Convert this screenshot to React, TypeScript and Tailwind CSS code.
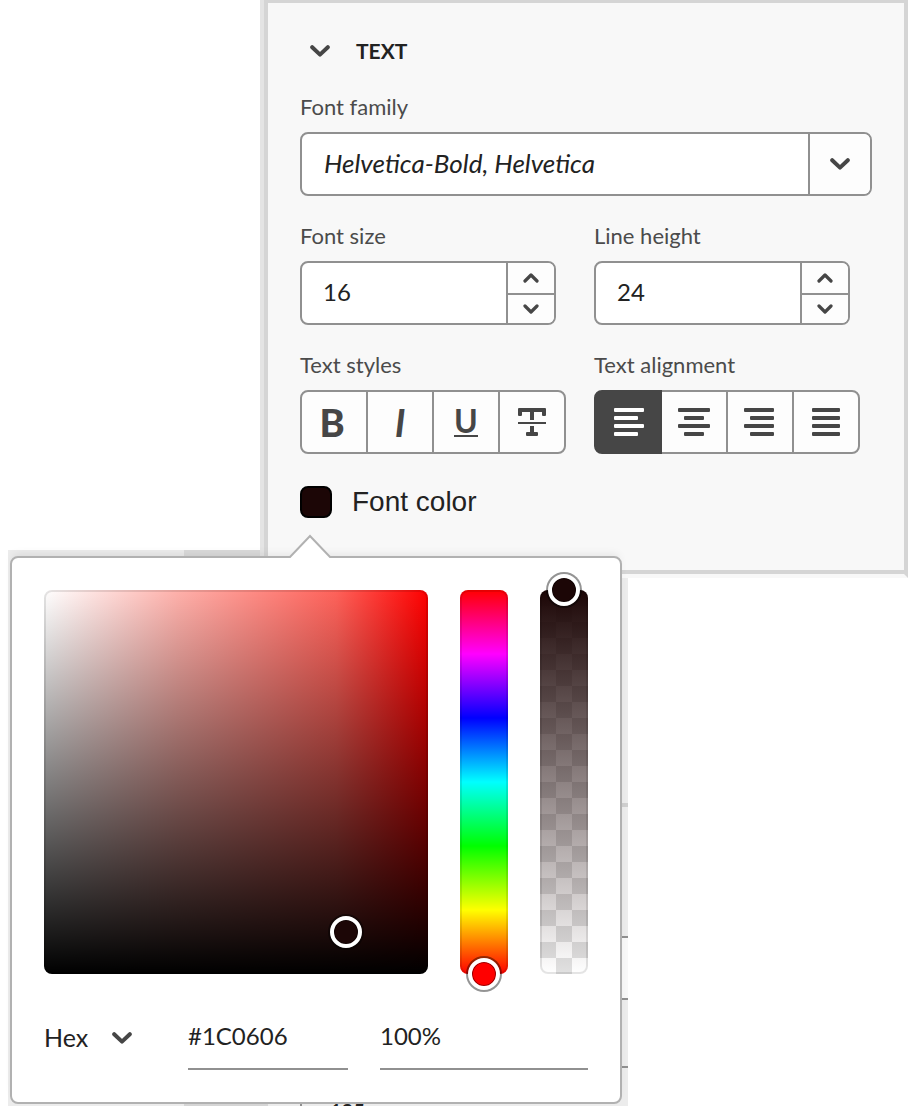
import { useState, type ReactNode } from "react";

function Chevron({ small = false, up = false }: { small?: boolean; up?: boolean }) {
  const flip = up ? "rotate-180" : "";
  return small ? (
    <svg aria-hidden="true" width="16" height="10" viewBox="0 0 16 10" className={flip}>
      <path d="M2 2l6 6 6-6" fill="none" stroke="#464646" strokeWidth="3.2" strokeLinecap="round" strokeLinejoin="round" />
    </svg>
  ) : (
    <svg aria-hidden="true" width="20" height="12" viewBox="0 0 20 12" className={flip}>
      <path d="M2.2 2.2L10 9.6l7.8-7.4" fill="none" stroke="#464646" strokeWidth="4" strokeLinecap="round" strokeLinejoin="round" />
    </svg>
  );
}

const labelClass = "mb-[13px] block text-[22px] leading-6 text-[#4b4b4b]";

function Stepper({ id, label, initial }: { id: string; label: string; initial: number }) {
  const [value, setValue] = useState(initial);
  return (
    <div>
      <label htmlFor={id} className={labelClass}>{label}</label>
      <div className="flex h-16 w-64 overflow-hidden rounded-lg border-2 border-[#909090] bg-white">
        <input
          id={id}
          inputMode="numeric"
          value={value}
          onChange={(e) => setValue(Number(e.target.value) || 0)}
          className="min-w-0 flex-1 bg-transparent pb-0.5 pl-[21px] text-2xl text-[#222] outline-none"
        />
        <div className="flex w-12 flex-col border-l-2 border-[#909090] bg-[#fdfdfd]">
          <button type="button" aria-label={`Increase ${label}`} onClick={() => setValue(value + 1)} className="flex h-8 items-center justify-center border-b-2 border-[#909090]">
            <Chevron small up />
          </button>
          <button type="button" aria-label={`Decrease ${label}`} onClick={() => setValue(value - 1)} className="flex flex-1 items-center justify-center">
            <Chevron small />
          </button>
        </div>
      </div>
    </div>
  );
}

function ToggleButton({ label, pressed, onClick, children }: { label: string; pressed: boolean; onClick: () => void; children: ReactNode }) {
  return (
    <button
      type="button"
      aria-label={label}
      aria-pressed={pressed}
      onClick={onClick}
      className={`-ml-0.5 flex h-16 w-[68px] items-center justify-center border-2 first:ml-0 first:rounded-l-lg last:rounded-r-lg ${
        pressed ? "z-10 border-[#464646] bg-[#464646] text-white" : "border-[#909090] bg-[#fdfdfd] text-[#464646]"
      }`}
    >
      {children}
    </button>
  );
}

// Start and width of each of the four bars.
const alignments: { label: string; bars: [number, number][] }[] = [
  { label: "Align left", bars: [[4, 30], [4, 24], [4, 30], [4, 24]] },
  { label: "Align center", bars: [[2, 32], [8, 20], [2, 32], [8, 20]] },
  { label: "Align right", bars: [[2, 30], [8, 24], [2, 30], [8, 24]] },
  { label: "Justify", bars: [[4, 28], [4, 28], [4, 28], [4, 28]] },
];

const styles: { label: string; icon: ReactNode }[] = [
  { label: "Bold", icon: <span className="pr-1 text-[38px] leading-none font-black">B</span> },
  { label: "Italic", icon: <span className="text-[38px] leading-none font-bold italic">I</span> },
  { label: "Underline", icon: <span className="border-b-2 border-[#464646] text-[32px] leading-7 font-bold">U</span> },
  {
    label: "Strikethrough",
    icon: (
      <svg aria-hidden="true" width="36" height="28" viewBox="0 0 36 28" fill="#464646">
        <path d="M5 0h26a1 1 0 0 1 1 1v6a1 1 0 0 1-1 1h-2a1 1 0 0 1-1-1V4h-8v8h-4V4H8v3a1 1 0 0 1-1 1H5a1 1 0 0 1-1-1V1a1 1 0 0 1 1-1z" />
        <path d="M4 14h28v2H4zM16 18h4v6h3a1 1 0 0 1 1 1v2a1 1 0 0 1-1 1H13a1 1 0 0 1-1-1v-2a1 1 0 0 1 1-1h3z" />
      </svg>
    ),
  },
];

function TextPanel() {
  const [family, setFamily] = useState("Helvetica-Bold, Helvetica");
  const [align, setAlign] = useState("Align left");
  const [active, setActive] = useState<string[]>([]);
  const toggle = (name: string) =>
    setActive(active.includes(name) ? active.filter((s) => s !== name) : [...active, name]);

  return (
    <section className="relative z-10 ml-[260px] border-r-4 border-b-4 border-l-4 border-r-[#d5d5d5] border-b-[#f8f8f8] border-l-[#e4e4e4]">
      <div className="flex flex-col gap-7 border-t-[3px] border-b-4 border-l-4 border-[#d5d5d5] bg-[#f8f8f8] px-8 pt-8 pb-12">
        <h2>
          <button type="button" className="flex h-8 items-center gap-[26px] pl-2.5 text-[21px] font-bold text-[#222]">
            <Chevron />
            TEXT
          </button>
        </h2>

        <div>
          <label htmlFor="family" className={labelClass}>Font family</label>
          <div className="flex h-16 overflow-hidden rounded-lg border-2 border-[#909090] bg-white">
            <input
              id="family"
              value={family}
              onChange={(e) => setFamily(e.target.value)}
              className="min-w-0 flex-1 bg-transparent pb-0.5 pl-[22px] text-[26px] text-[#222] italic outline-none"
            />
            <button type="button" aria-label="Show font families" className="flex w-[62px] items-center justify-center border-l-2 border-[#909090] bg-[#fdfdfd]">
              <Chevron />
            </button>
          </div>
        </div>

        <div className="grid grid-cols-2 gap-x-4 gap-y-7">
          <Stepper id="size" label="Font size" initial={16} />
          <Stepper id="line" label="Line height" initial={24} />
          <div role="group" aria-labelledby="styles-label">
            <span id="styles-label" className={labelClass}>Text styles</span>
            <div className="flex">
              {styles.map((s) => (
                <ToggleButton key={s.label} label={s.label} pressed={active.includes(s.label)} onClick={() => toggle(s.label)}>
                  {s.icon}
                </ToggleButton>
              ))}
            </div>
          </div>
          <div role="group" aria-labelledby="align-label">
            <span id="align-label" className={labelClass}>Text alignment</span>
            <div className="flex">
              {alignments.map((a) => (
                <ToggleButton key={a.label} label={a.label} pressed={align === a.label} onClick={() => setAlign(a.label)}>
                  <svg aria-hidden="true" width="36" height="28" viewBox="0 0 36 28" fill="currentColor">
                    {a.bars.map(([x, w], i) => (
                      <rect key={i} x={x} y={i * 8} width={w} height="4" rx="1" />
                    ))}
                  </svg>
                </ToggleButton>
              ))}
            </div>
          </div>
        </div>

        <button type="button" className="flex h-10 items-center gap-5 self-start font-['Liberation_Sans',Arial,sans-serif] text-[28px] text-[#222]">
          <span className="size-8 rounded-lg border-2 border-black bg-[#1c0606]" />
          Font color
        </button>
      </div>
    </section>
  );
}

const thumbClass =
  "absolute size-8 -translate-x-1/2 -translate-y-1/2 rounded-full border-4 border-white shadow-[0_0_0_2px_rgba(0,0,0,0.42),inset_0_0_0_1px_rgba(0,0,0,0.42)]";
const edgeClass = "absolute inset-0 rounded-lg border-2 border-black/10";
const rangeClass = "absolute inset-0 h-full w-full cursor-pointer opacity-0 [writing-mode:vertical-lr]";

function ColorPopover() {
  const [hex, setHex] = useState("#1C0606");
  const [opacity, setOpacity] = useState("100%");
  return (
    <div role="dialog" aria-label="Font color" className="relative z-20 rounded-lg border-2 border-[#b1b1b1] bg-white p-8 shadow-[0_-5px_8px_-3px_rgba(0,0,0,0.08)]">
      <svg aria-hidden="true" width="44" height="24" viewBox="0 0 44 24" className="absolute -top-6 left-[276px]">
        <path d="M2 22L22 2l20 20v2H2z" fill="#fff" />
        <path d="M0.500 23h1.500L22 2l20 21h1.500" fill="none" stroke="#b1b1b1" strokeWidth="2" />
      </svg>

      <div className="flex gap-8">
        <div className="relative h-96 flex-1 rounded-lg bg-[linear-gradient(to_top,#000,transparent),linear-gradient(to_right,#fff,#ffb0aa_35%,#ff625a_76%,#f00)]">
          <div className={edgeClass} />
          <div className={`${thumbClass} top-[89%] left-[302px] bg-[#1c0606]`} />
          <input type="range" aria-label="Saturation and brightness" className={rangeClass} />
        </div>
        <div className="relative h-96 w-12 rounded-lg bg-[linear-gradient(to_bottom,#f00,#f0f,#00f,#0ff,#0f0,#ff0,#f00)]">
          <div className={edgeClass} />
          <div className={`${thumbClass} top-full left-1/2 bg-[#f00]`} />
          <input type="range" aria-label="Hue" className={rangeClass} />
        </div>
        <div className="relative h-96 w-12 rounded-lg bg-[linear-gradient(to_bottom,#1c0606,transparent),repeating-conic-gradient(#fff_0_25%,#e1e1e1_0_50%)] bg-[length:100%_100%,32px_32px]">
          <div className={edgeClass} />
          <div className={`${thumbClass} top-0 left-1/2 bg-[#1c0606]`} />
          <input type="range" aria-label="Opacity" className={rangeClass} />
        </div>
      </div>

      <div className="mt-8 flex gap-8 text-2xl text-[#222]">
        <div className="relative flex h-16 w-28 items-center">
          <select aria-label="Color format" defaultValue="Hex" className="h-full w-full appearance-none bg-transparent text-[25px] outline-none">
            <option>Hex</option>
            <option>RGB</option>
            <option>HSL</option>
          </select>
          <span className="pointer-events-none absolute right-6">
            <Chevron />
          </span>
        </div>
        <input
          aria-label="Color value"
          value={hex}
          onChange={(e) => setHex(e.target.value)}
          className="h-16 w-40 border-b-2 border-[#909090] bg-transparent pb-1 outline-none"
        />
        <input
          aria-label="Opacity value"
          value={opacity}
          onChange={(e) => setOpacity(e.target.value)}
          className="h-16 min-w-0 flex-1 border-b-2 border-[#909090] bg-transparent pb-1 outline-none"
        />
      </div>
    </div>
  );
}

export default function App() {
  return (
    <main className="min-h-screen bg-white font-['Lato','Open_Sans',sans-serif]">
      <TextPanel />
      {/* The page content that shows around the edges of the popover. */}
      <div className="relative -mt-7 ml-2 w-[620px] bg-[#ececec] pt-1.5 pr-1.5 pb-0.5 pl-0.5">
        <div className="absolute top-0 left-44 h-1.5 w-[76px] bg-[#dadada]" />
        <div className="absolute top-[253px] right-0 h-1 w-1.5 bg-[#cfcfcf]" />
        <div className="absolute top-[386px] right-0 h-16 w-1.5 border-y-2 border-[#909090] bg-[#f8f8f8]" />
        <div className="absolute top-[516px] right-0 h-0.5 w-1.5 bg-[#909090]" />
        <div className="absolute bottom-0 left-44 h-0.5 w-[84px] bg-[#d5d5d5]" />
        <div className="absolute bottom-0 left-[292px] h-0.5 w-0.5 bg-[#909090]" />
        <div className="absolute bottom-0 left-[322px] h-0.5 w-10 overflow-hidden text-[20px] leading-[14px] font-bold text-[#222]">125</div>
        <ColorPopover />
      </div>
    </main>
  );
}
